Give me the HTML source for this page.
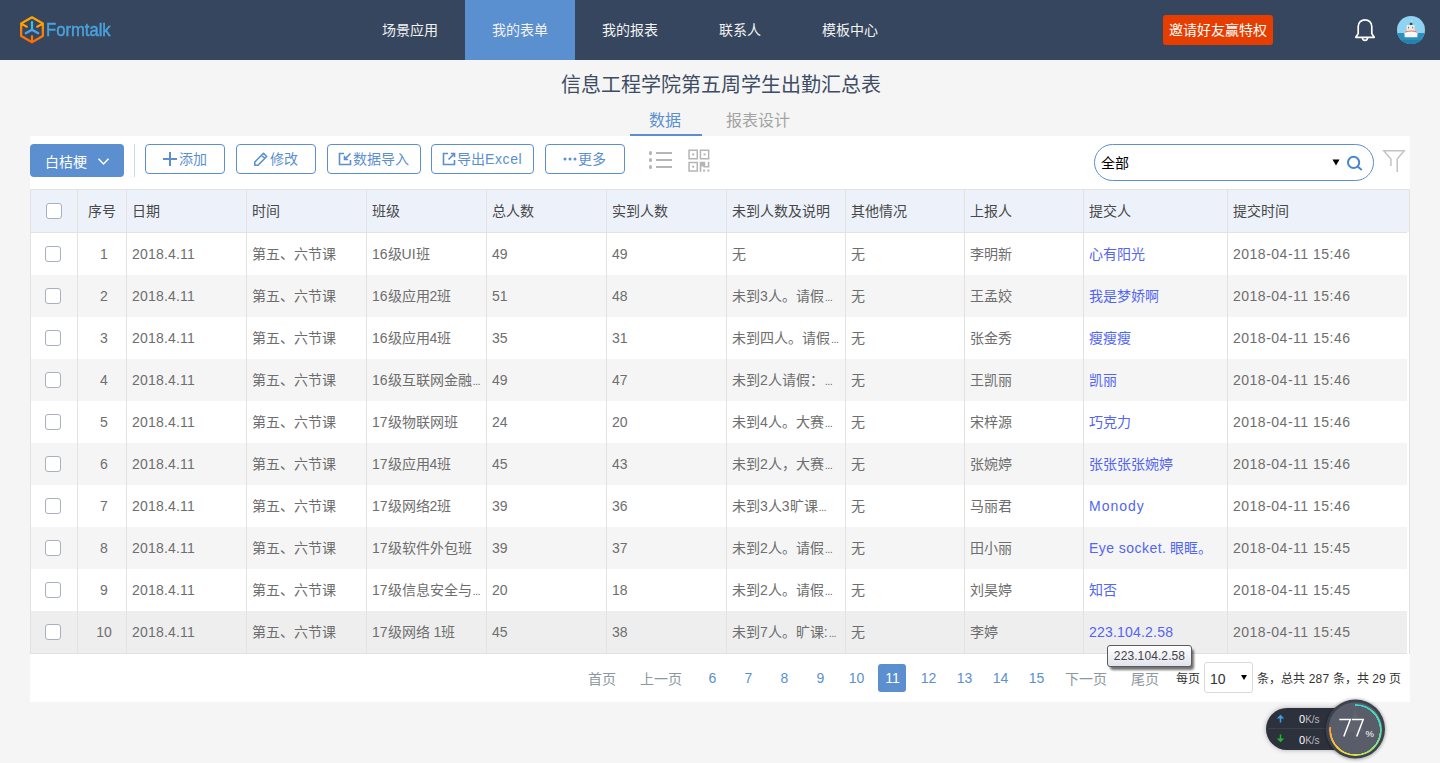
<!DOCTYPE html><html lang="zh-CN"><head><meta charset="utf-8"><title>Formtalk</title><style>
*{box-sizing:border-box;margin:0;padding:0}
html,body{width:1440px;height:763px;overflow:hidden}
body{background:#f5f5f5;font-family:"Liberation Sans",sans-serif;font-size:14px;color:#333;position:relative}
.abs{position:absolute}
.hdr{left:0;top:0;width:1440px;height:60px;background:#36465f}
.nav{top:0;height:60px;width:110px;color:#f2f2f2;font-size:14px;line-height:60px;text-align:center}
.nav.on{background:#5a8fd0}
.btn{top:144px;height:30px;border:1px solid #5b8fd0;border-radius:4px;background:#fff;color:#5b8fd0;font-size:14px;line-height:28px}
.cell{height:42px;line-height:42px;font-size:14px;color:#6e6e6e;white-space:nowrap;overflow:hidden;padding-left:5px}
.hc{color:#484848}
.vl{width:1px;background:#e2e2e2}
.cb{width:16px;height:16px;border:1px solid #a9b1bf;border-radius:3px;background:#fff}
.pg{top:664px;width:28px;text-indent:1px;height:28px;line-height:28px;text-align:center;color:#5b8fd0;font-size:14px}
.pgt{top:665px;height:28px;line-height:28px;color:#8e979f;font-size:14px}
</style></head><body>
<div class="abs hdr"></div>
<svg class="abs" style="left:17px;top:14px" width="30" height="32" viewBox="0 0 30 32">
<defs><linearGradient id="lg1" x1="0" y1="0" x2="0" y2="1"><stop offset="0" stop-color="#ffa800"/><stop offset="1" stop-color="#ff6a00"/></linearGradient>
<linearGradient id="lg2" x1="0" y1="0" x2="0" y2="1"><stop offset="0" stop-color="#1fd2f0"/><stop offset="1" stop-color="#5a9ae8"/></linearGradient></defs>
<path d="M15 3.3 L25.83 9.55 L25.83 22.05 L15 28.3 L4.17 22.05 L4.17 9.55 Z" fill="none" stroke="url(#lg1)" stroke-width="2.2" stroke-linejoin="round"/>
<path d="M5 10.1 L9.8 12.7 M25 10.1 L20.2 12.7 M15 27.5 L15 22.4" stroke="url(#lg1)" stroke-width="2.2" stroke-linecap="round"/>
<path d="M15 8.2 L15 15.7 L8.7 19.3 M15 15.7 L21.3 19.3" fill="none" stroke="url(#lg2)" stroke-width="2.2" stroke-linecap="round" stroke-linejoin="round"/>
</svg>
<div class="abs" style="left:46px;top:19px;font-size:19px;line-height:22px;color:#4aa3df;-webkit-text-stroke:0.45px #4aa3df;transform:scaleX(0.875);transform-origin:0 0">Formtalk</div>
<div class="abs nav" style="left:355px">场景应用</div>
<div class="abs nav on" style="left:465px">我的表单</div>
<div class="abs nav" style="left:575px">我的报表</div>
<div class="abs nav" style="left:685px">联系人</div>
<div class="abs nav" style="left:795px">模板中心</div>
<div class="abs" style="left:1163px;top:15px;width:110px;height:30px;background:#e63d00;border-radius:3px;color:#fff;font-size:14px;line-height:30px;text-align:center">邀请好友赢特权</div>
<svg class="abs" style="left:1352px;top:17px" width="26" height="26" viewBox="0 0 26 26">
<path d="M3.8 20.3 L22.2 20.3 L19.8 16.6 L19.8 9.6 C19.8 5.4 16.8 2.8 13 2.8 C9.2 2.8 6.2 5.4 6.2 9.6 L6.2 16.6 Z" fill="none" stroke="#fff" stroke-width="1.7" stroke-linejoin="round"/>
<path d="M10.4 20.8 C10.7 22.6 11.7 23.4 13 23.4 C14.3 23.4 15.3 22.6 15.6 20.8" fill="none" stroke="#fff" stroke-width="1.6"/>
</svg>
<svg class="abs" style="left:1397px;top:16px" width="28" height="28" viewBox="0 0 28 28">
<defs><clipPath id="cp"><circle cx="14" cy="14" r="14"/></clipPath></defs>
<g clip-path="url(#cp)"><rect width="28" height="28" fill="#8fd3f0"/><rect y="17" width="28" height="11" fill="#2b90c0"/><rect y="24" width="28" height="4" fill="#2580ae"/>
<path d="M14.5 4 q1.5 1 0 2" stroke="#c8ecfa" stroke-width="0.8" fill="none"/>
<rect x="12.8" y="6.8" width="2.6" height="2.4" fill="#4a4a4a"/>
<rect x="9.6" y="9" width="8" height="6" fill="#ececec"/><rect x="11" y="10.8" width="1" height="1.6" fill="#777"/><rect x="15.2" y="10.8" width="1" height="1.6" fill="#777"/>
<path d="M7.3 15.6 Q14 13.2 20.7 15.6 L20.3 21.3 L7.7 21.3 Z" fill="#f7f7f7"/><path d="M7.5 16.3 Q14 13.8 20.5 16.3" stroke="#e9705a" stroke-width="1.1" fill="none"/></g>
</svg>
<div class="abs" style="left:0;top:73px;width:1441px;text-align:center;font-size:20px;line-height:24px;color:#3e4d63;font-weight:300">信息工程学院第五周学生出勤汇总表</div>
<div class="abs" style="left:630px;top:110px;width:72px;text-align:center;text-indent:-2px;font-size:16px;line-height:22px;color:#5b8fd0">数据</div>
<div class="abs" style="left:630px;top:134px;width:72px;height:2px;background:#5b8fd0"></div>
<div class="abs" style="left:726px;top:110px;font-size:16px;line-height:22px;color:#a3a3a3">报表设计</div>
<div class="abs" style="left:30px;top:136px;width:1380px;height:566px;background:#fff"></div>
<div class="abs" style="left:30px;top:144px;width:94px;height:33px;background:#5b8fd0;border-radius:4px;color:#fff;font-size:14px;line-height:36px;padding-left:15px">白桔梗</div>
<svg class="abs" style="left:97px;top:157px" width="13" height="9" viewBox="0 0 13 9"><path d="M1.5 1.8 L6.5 7 L11.5 1.8" fill="none" stroke="#fff" stroke-width="1.5"/></svg>
<div class="abs" style="left:134px;top:144px;width:1px;height:33px;background:#cdd9ea"></div>
<div class="abs btn" style="left:145px;width:80px"></div>
<div class="abs btn" style="left:236px;width:80px"></div>
<div class="abs btn" style="left:327px;width:94px"></div>
<div class="abs btn" style="left:431px;width:103px"></div>
<div class="abs btn" style="left:545px;width:80px"></div>
<svg class="abs" style="left:163px;top:152px" width="14" height="14"><path d="M7 0 V14 M0 7 H14" stroke="#5b8fd0" stroke-width="2"/></svg>
<div class="abs" style="left:179px;top:148px;line-height:22px;color:#5b8fd0">添加</div>
<svg class="abs" style="left:253px;top:151px" width="16" height="16" viewBox="0 0 16 16"><path d="M1.8 14.2 L1.8 11 L10.5 2.3 L13.7 5.5 L5 14.2 Z M8.5 4.3 L11.7 7.5" fill="none" stroke="#5b8fd0" stroke-width="1.6" stroke-linejoin="round"/></svg>
<div class="abs" style="left:270px;top:148px;line-height:22px;color:#5b8fd0">修改</div>
<svg class="abs" style="left:338px;top:152px" width="14" height="14" viewBox="0 0 14 14"><path d="M6 1.5 H1.5 V12.5 H12.5 V8" fill="none" stroke="#5b8fd0" stroke-width="1.6"/><path d="M12.5 1.5 L6.5 7.5 M6.5 3.8 V7.5 H10.2" fill="none" stroke="#5b8fd0" stroke-width="1.6"/></svg>
<div class="abs" style="left:353px;top:148px;line-height:22px;color:#5b8fd0">数据导入</div>
<svg class="abs" style="left:442px;top:152px" width="14" height="14" viewBox="0 0 14 14"><path d="M6 1.5 H1.5 V12.5 H12.5 V8" fill="none" stroke="#5b8fd0" stroke-width="1.6"/><path d="M6.5 7.5 L12.5 1.5 M8.8 1.5 H12.5 V5.2" fill="none" stroke="#5b8fd0" stroke-width="1.6"/></svg>
<div class="abs" style="left:457px;top:148px;line-height:22px;color:#5b8fd0">导出<span style="letter-spacing:0.6px">Excel</span></div>
<svg class="abs" style="left:563px;top:157px" width="14" height="4"><circle cx="2" cy="2" r="1.5" fill="#5b8fd0"/><circle cx="7" cy="2" r="1.5" fill="#5b8fd0"/><circle cx="12" cy="2" r="1.5" fill="#5b8fd0"/></svg>
<div class="abs" style="left:578px;top:148px;line-height:22px;color:#5b8fd0">更多</div>
<svg class="abs" style="left:648px;top:149px" width="26" height="22" viewBox="0 0 26 22">
<rect x="1" y="2" width="3" height="4" rx="1.5" fill="#b5b5b5"/><rect x="1" y="9" width="3" height="4" rx="1.5" fill="#b5b5b5"/><rect x="1" y="16" width="3" height="4" rx="1.5" fill="#b5b5b5"/>
<rect x="8" y="3" width="16" height="2" fill="#b5b5b5"/><rect x="8" y="10" width="16" height="2" fill="#b5b5b5"/><rect x="8" y="17" width="16" height="2" fill="#b5b5b5"/></svg>
<svg class="abs" style="left:688px;top:149px" width="23" height="24" viewBox="0 0 23 24" fill="#b5b5b5">
<path d="M0.3 0.4 H10 V10.4 H0.3 Z M1.8 1.9 V8.9 H8.5 V1.9 Z" fill-rule="evenodd"/><rect x="4.2" y="4.4" width="2" height="2"/>
<path d="M11.7 0.4 H21.4 V10.4 H11.7 Z M13.2 1.9 V8.9 H19.9 V1.9 Z" fill-rule="evenodd"/><rect x="15.6" y="4.4" width="2" height="2"/>
<path d="M0.3 12.7 H10 V22.7 H0.3 Z M1.8 14.2 V21.2 H8.5 V14.2 Z" fill-rule="evenodd"/><rect x="4.2" y="16.7" width="2" height="2"/>
<path d="M11.7 12.7 H17.2 V17 H19.8 V12.7 H21.4 V18.5 H15.4 V17.4 H13.4 V22.7 H11.7 Z"/><rect x="15.1" y="20.6" width="2" height="2"/><rect x="19.4" y="20.6" width="2" height="2"/>
</svg>
<div class="abs" style="left:1094px;top:144px;width:280px;height:37px;border:1px solid #5b8fd0;border-radius:18.5px;background:#fff"></div>
<div class="abs" style="left:1101px;top:152px;line-height:22px;color:#000;font-size:14px">全部</div>
<svg class="abs" style="left:1332px;top:159px" width="8" height="7"><path d="M0.5 0.5 H7.5 L4 6.5 Z" fill="#000"/></svg>
<svg class="abs" style="left:1345px;top:154px" width="20" height="18" viewBox="0 0 20 18"><circle cx="8.6" cy="8.4" r="5.6" fill="none" stroke="#4a86cf" stroke-width="2"/><path d="M12.6 12.4 L16.8 16" stroke="#4a86cf" stroke-width="2"/></svg>
<svg class="abs" style="left:1382px;top:149px" width="24" height="24" viewBox="0 0 24 24"><path d="M8.9 17 V10 L1.8 1.8 H22.2 L15.2 10 V23" fill="none" stroke="#c4c4c4" stroke-width="1.5"/></svg>
<div class="abs" style="left:30px;top:189px;width:1380px;height:1px;background:#e2e2e2"></div>
<div class="abs" style="left:30px;top:190px;width:1379px;height:42px;background:#edf2fa"></div>
<div class="abs" style="left:30px;top:232px;width:1377px;height:1px;background:#e2e2e2"></div>
<div class="abs" style="left:31px;top:233px;width:1376px;height:42px;background:#fff"></div>
<div class="abs" style="left:31px;top:275px;width:1376px;height:42px;background:#f5f5f5"></div>
<div class="abs" style="left:31px;top:317px;width:1376px;height:42px;background:#fff"></div>
<div class="abs" style="left:31px;top:359px;width:1376px;height:42px;background:#f5f5f5"></div>
<div class="abs" style="left:31px;top:401px;width:1376px;height:42px;background:#fff"></div>
<div class="abs" style="left:31px;top:443px;width:1376px;height:42px;background:#f5f5f5"></div>
<div class="abs" style="left:31px;top:485px;width:1376px;height:42px;background:#fff"></div>
<div class="abs" style="left:31px;top:527px;width:1376px;height:42px;background:#f5f5f5"></div>
<div class="abs" style="left:31px;top:569px;width:1376px;height:42px;background:#fff"></div>
<div class="abs" style="left:31px;top:611px;width:1376px;height:42px;background:#eeeeee"></div>
<div class="abs" style="left:30px;top:653px;width:1377px;height:1px;background:#e2e2e2"></div>
<div class="abs vl" style="left:30px;top:189px;height:465px"></div>
<div class="abs vl" style="left:77px;top:190px;height:463px"></div>
<div class="abs vl" style="left:126px;top:190px;height:463px"></div>
<div class="abs vl" style="left:246px;top:190px;height:463px"></div>
<div class="abs vl" style="left:366px;top:190px;height:463px"></div>
<div class="abs vl" style="left:486px;top:190px;height:463px"></div>
<div class="abs vl" style="left:606px;top:190px;height:463px"></div>
<div class="abs vl" style="left:726px;top:190px;height:463px"></div>
<div class="abs vl" style="left:845px;top:190px;height:463px"></div>
<div class="abs vl" style="left:964px;top:190px;height:463px"></div>
<div class="abs vl" style="left:1083px;top:190px;height:463px"></div>
<div class="abs vl" style="left:1227px;top:190px;height:463px"></div>
<div class="abs vl" style="left:1409px;top:189px;height:465px"></div>
<div class="abs cb" style="left:46px;top:203px"></div>
<div class="abs cell hc" style="left:78px;top:190px;width:48px;text-align:center;padding-left:0">序号</div>
<div class="abs cell hc" style="left:127px;top:190px;width:119px">日期</div>
<div class="abs cell hc" style="left:247px;top:190px;width:119px">时间</div>
<div class="abs cell hc" style="left:367px;top:190px;width:119px">班级</div>
<div class="abs cell hc" style="left:487px;top:190px;width:119px">总人数</div>
<div class="abs cell hc" style="left:607px;top:190px;width:119px">实到人数</div>
<div class="abs cell hc" style="left:727px;top:190px;width:118px">未到人数及说明</div>
<div class="abs cell hc" style="left:846px;top:190px;width:118px">其他情况</div>
<div class="abs cell hc" style="left:965px;top:190px;width:118px">上报人</div>
<div class="abs cell hc" style="left:1084px;top:190px;width:143px">提交人</div>
<div class="abs cell hc" style="left:1228px;top:190px;width:180px">提交时间</div>
<div class="abs cb" style="left:45px;top:246px"></div>
<div class="abs cell" style="left:78px;top:233px;width:48px;text-align:center;padding-left:0;text-indent:4px">1</div>
<div class="abs cell" style="left:127px;top:233px;width:119px;letter-spacing:0.2px">2018.4.11</div>
<div class="abs cell" style="left:247px;top:233px;width:119px">第五、六节课</div>
<div class="abs cell" style="left:367px;top:233px;width:119px">16级UI班</div>
<div class="abs cell" style="left:487px;top:233px;width:119px">49</div>
<div class="abs cell" style="left:607px;top:233px;width:119px">49</div>
<div class="abs cell" style="left:727px;top:233px;width:118px">无</div>
<div class="abs cell" style="left:846px;top:233px;width:118px">无</div>
<div class="abs cell" style="left:965px;top:233px;width:118px">李明新</div>
<div class="abs cell" style="left:1084px;top:233px;width:143px;color:#5266f2">心有阳光</div>
<div class="abs cell" style="left:1228px;top:233px;width:180px;letter-spacing:0.5px">2018-04-11 15:46</div>
<div class="abs cb" style="left:45px;top:288px"></div>
<div class="abs cell" style="left:78px;top:275px;width:48px;text-align:center;padding-left:0;text-indent:4px">2</div>
<div class="abs cell" style="left:127px;top:275px;width:119px;letter-spacing:0.2px">2018.4.11</div>
<div class="abs cell" style="left:247px;top:275px;width:119px">第五、六节课</div>
<div class="abs cell" style="left:367px;top:275px;width:119px">16级应用2班</div>
<div class="abs cell" style="left:487px;top:275px;width:119px">51</div>
<div class="abs cell" style="left:607px;top:275px;width:119px">48</div>
<div class="abs cell" style="left:727px;top:275px;width:118px">未到3人。请假<span style="font-size:11px;letter-spacing:-0.6px;margin-left:1px">...</span></div>
<div class="abs cell" style="left:846px;top:275px;width:118px">无</div>
<div class="abs cell" style="left:965px;top:275px;width:118px">王孟姣</div>
<div class="abs cell" style="left:1084px;top:275px;width:143px;color:#5266f2">我是梦娇啊</div>
<div class="abs cell" style="left:1228px;top:275px;width:180px;letter-spacing:0.5px">2018-04-11 15:46</div>
<div class="abs cb" style="left:45px;top:330px"></div>
<div class="abs cell" style="left:78px;top:317px;width:48px;text-align:center;padding-left:0;text-indent:4px">3</div>
<div class="abs cell" style="left:127px;top:317px;width:119px;letter-spacing:0.2px">2018.4.11</div>
<div class="abs cell" style="left:247px;top:317px;width:119px">第五、六节课</div>
<div class="abs cell" style="left:367px;top:317px;width:119px">16级应用4班</div>
<div class="abs cell" style="left:487px;top:317px;width:119px">35</div>
<div class="abs cell" style="left:607px;top:317px;width:119px">31</div>
<div class="abs cell" style="left:727px;top:317px;width:118px">未到四人。请假<span style="font-size:11px;letter-spacing:-0.6px;margin-left:1px">...</span></div>
<div class="abs cell" style="left:846px;top:317px;width:118px">无</div>
<div class="abs cell" style="left:965px;top:317px;width:118px">张金秀</div>
<div class="abs cell" style="left:1084px;top:317px;width:143px;color:#5266f2">瘦瘦瘦</div>
<div class="abs cell" style="left:1228px;top:317px;width:180px;letter-spacing:0.5px">2018-04-11 15:46</div>
<div class="abs cb" style="left:45px;top:372px"></div>
<div class="abs cell" style="left:78px;top:359px;width:48px;text-align:center;padding-left:0;text-indent:4px">4</div>
<div class="abs cell" style="left:127px;top:359px;width:119px;letter-spacing:0.2px">2018.4.11</div>
<div class="abs cell" style="left:247px;top:359px;width:119px">第五、六节课</div>
<div class="abs cell" style="left:367px;top:359px;width:119px">16级互联网金融<span style="font-size:11px;letter-spacing:-0.6px;margin-left:1px">...</span></div>
<div class="abs cell" style="left:487px;top:359px;width:119px">49</div>
<div class="abs cell" style="left:607px;top:359px;width:119px">47</div>
<div class="abs cell" style="left:727px;top:359px;width:118px">未到2人请假：<span style="font-size:11px;letter-spacing:-0.6px;margin-left:1px">...</span></div>
<div class="abs cell" style="left:846px;top:359px;width:118px">无</div>
<div class="abs cell" style="left:965px;top:359px;width:118px">王凯丽</div>
<div class="abs cell" style="left:1084px;top:359px;width:143px;color:#5266f2">凯丽</div>
<div class="abs cell" style="left:1228px;top:359px;width:180px;letter-spacing:0.5px">2018-04-11 15:46</div>
<div class="abs cb" style="left:45px;top:414px"></div>
<div class="abs cell" style="left:78px;top:401px;width:48px;text-align:center;padding-left:0;text-indent:4px">5</div>
<div class="abs cell" style="left:127px;top:401px;width:119px;letter-spacing:0.2px">2018.4.11</div>
<div class="abs cell" style="left:247px;top:401px;width:119px">第五、六节课</div>
<div class="abs cell" style="left:367px;top:401px;width:119px">17级物联网班</div>
<div class="abs cell" style="left:487px;top:401px;width:119px">24</div>
<div class="abs cell" style="left:607px;top:401px;width:119px">20</div>
<div class="abs cell" style="left:727px;top:401px;width:118px">未到4人。大赛<span style="font-size:11px;letter-spacing:-0.6px;margin-left:1px">...</span></div>
<div class="abs cell" style="left:846px;top:401px;width:118px">无</div>
<div class="abs cell" style="left:965px;top:401px;width:118px">宋梓源</div>
<div class="abs cell" style="left:1084px;top:401px;width:143px;color:#5266f2">巧克力</div>
<div class="abs cell" style="left:1228px;top:401px;width:180px;letter-spacing:0.5px">2018-04-11 15:46</div>
<div class="abs cb" style="left:45px;top:456px"></div>
<div class="abs cell" style="left:78px;top:443px;width:48px;text-align:center;padding-left:0;text-indent:4px">6</div>
<div class="abs cell" style="left:127px;top:443px;width:119px;letter-spacing:0.2px">2018.4.11</div>
<div class="abs cell" style="left:247px;top:443px;width:119px">第五、六节课</div>
<div class="abs cell" style="left:367px;top:443px;width:119px">17级应用4班</div>
<div class="abs cell" style="left:487px;top:443px;width:119px">45</div>
<div class="abs cell" style="left:607px;top:443px;width:119px">43</div>
<div class="abs cell" style="left:727px;top:443px;width:118px">未到2人，大赛<span style="font-size:11px;letter-spacing:-0.6px;margin-left:1px">...</span></div>
<div class="abs cell" style="left:846px;top:443px;width:118px">无</div>
<div class="abs cell" style="left:965px;top:443px;width:118px">张婉婷</div>
<div class="abs cell" style="left:1084px;top:443px;width:143px;color:#5266f2">张张张张婉婷</div>
<div class="abs cell" style="left:1228px;top:443px;width:180px;letter-spacing:0.5px">2018-04-11 15:46</div>
<div class="abs cb" style="left:45px;top:498px"></div>
<div class="abs cell" style="left:78px;top:485px;width:48px;text-align:center;padding-left:0;text-indent:4px">7</div>
<div class="abs cell" style="left:127px;top:485px;width:119px;letter-spacing:0.2px">2018.4.11</div>
<div class="abs cell" style="left:247px;top:485px;width:119px">第五、六节课</div>
<div class="abs cell" style="left:367px;top:485px;width:119px">17级网络2班</div>
<div class="abs cell" style="left:487px;top:485px;width:119px">39</div>
<div class="abs cell" style="left:607px;top:485px;width:119px">36</div>
<div class="abs cell" style="left:727px;top:485px;width:118px">未到3人3旷课<span style="font-size:11px;letter-spacing:-0.6px;margin-left:1px">...</span></div>
<div class="abs cell" style="left:846px;top:485px;width:118px">无</div>
<div class="abs cell" style="left:965px;top:485px;width:118px">马丽君</div>
<div class="abs cell" style="left:1084px;top:485px;width:143px;color:#5266f2;letter-spacing:1px">Monody</div>
<div class="abs cell" style="left:1228px;top:485px;width:180px;letter-spacing:0.5px">2018-04-11 15:46</div>
<div class="abs cb" style="left:45px;top:540px"></div>
<div class="abs cell" style="left:78px;top:527px;width:48px;text-align:center;padding-left:0;text-indent:4px">8</div>
<div class="abs cell" style="left:127px;top:527px;width:119px;letter-spacing:0.2px">2018.4.11</div>
<div class="abs cell" style="left:247px;top:527px;width:119px">第五、六节课</div>
<div class="abs cell" style="left:367px;top:527px;width:119px">17级软件外包班</div>
<div class="abs cell" style="left:487px;top:527px;width:119px">39</div>
<div class="abs cell" style="left:607px;top:527px;width:119px">37</div>
<div class="abs cell" style="left:727px;top:527px;width:118px">未到2人。请假<span style="font-size:11px;letter-spacing:-0.6px;margin-left:1px">...</span></div>
<div class="abs cell" style="left:846px;top:527px;width:118px">无</div>
<div class="abs cell" style="left:965px;top:527px;width:118px">田小丽</div>
<div class="abs cell" style="left:1084px;top:527px;width:143px;color:#5266f2"><span style="letter-spacing:0.45px">Eye socket.</span> 眼眶。</div>
<div class="abs cell" style="left:1228px;top:527px;width:180px;letter-spacing:0.5px">2018-04-11 15:45</div>
<div class="abs cb" style="left:45px;top:582px"></div>
<div class="abs cell" style="left:78px;top:569px;width:48px;text-align:center;padding-left:0;text-indent:4px">9</div>
<div class="abs cell" style="left:127px;top:569px;width:119px;letter-spacing:0.2px">2018.4.11</div>
<div class="abs cell" style="left:247px;top:569px;width:119px">第五、六节课</div>
<div class="abs cell" style="left:367px;top:569px;width:119px">17级信息安全与<span style="font-size:11px;letter-spacing:-0.6px;margin-left:1px">...</span></div>
<div class="abs cell" style="left:487px;top:569px;width:119px">20</div>
<div class="abs cell" style="left:607px;top:569px;width:119px">18</div>
<div class="abs cell" style="left:727px;top:569px;width:118px">未到2人。请假<span style="font-size:11px;letter-spacing:-0.6px;margin-left:1px">...</span></div>
<div class="abs cell" style="left:846px;top:569px;width:118px">无</div>
<div class="abs cell" style="left:965px;top:569px;width:118px">刘昊婷</div>
<div class="abs cell" style="left:1084px;top:569px;width:143px;color:#5266f2">知否</div>
<div class="abs cell" style="left:1228px;top:569px;width:180px;letter-spacing:0.5px">2018-04-11 15:45</div>
<div class="abs cb" style="left:45px;top:624px"></div>
<div class="abs cell" style="left:78px;top:611px;width:48px;text-align:center;padding-left:0;text-indent:4px">10</div>
<div class="abs cell" style="left:127px;top:611px;width:119px;letter-spacing:0.2px">2018.4.11</div>
<div class="abs cell" style="left:247px;top:611px;width:119px">第五、六节课</div>
<div class="abs cell" style="left:367px;top:611px;width:119px">17级网络 1班</div>
<div class="abs cell" style="left:487px;top:611px;width:119px">45</div>
<div class="abs cell" style="left:607px;top:611px;width:119px">38</div>
<div class="abs cell" style="left:727px;top:611px;width:118px">未到7人。旷课:<span style="font-size:11px;letter-spacing:-0.6px;margin-left:1px">...</span></div>
<div class="abs cell" style="left:846px;top:611px;width:118px">无</div>
<div class="abs cell" style="left:965px;top:611px;width:118px">李婷</div>
<div class="abs cell" style="left:1084px;top:611px;width:143px;color:#5266f2;letter-spacing:0.2px">223.104.2.58</div>
<div class="abs cell" style="left:1228px;top:611px;width:180px;letter-spacing:0.5px">2018-04-11 15:45</div>
<div class="abs pgt" style="left:588px">首页</div>
<div class="abs pgt" style="left:640px">上一页</div>
<div class="abs pg" style="left:698px">6</div>
<div class="abs pg" style="left:734px">7</div>
<div class="abs pg" style="left:770px">8</div>
<div class="abs pg" style="left:806px">9</div>
<div class="abs pg" style="left:842px">10</div>
<div class="abs pg" style="left:878px;background:#5b8fd0;color:#fff;border-radius:3px">11</div>
<div class="abs pg" style="left:914px">12</div>
<div class="abs pg" style="left:950px">13</div>
<div class="abs pg" style="left:986px">14</div>
<div class="abs pg" style="left:1022px">15</div>
<div class="abs pgt" style="left:1065px">下一页</div>
<div class="abs pgt" style="left:1131px">尾页</div>
<div class="abs pgt" style="left:1176px;color:#333;font-size:12px">每页</div>
<div class="abs" style="left:1204px;top:662px;width:49px;height:31px;border:1px solid #d9d9d9;border-radius:3px;background:#fff"></div>
<div class="abs" style="left:1210px;top:668px;line-height:22px;color:#333">10</div>
<svg class="abs" style="left:1241px;top:675px" width="6" height="5"><path d="M0 0 H6 L3 5 Z" fill="#000"/></svg>
<div class="abs pgt" style="left:1257px;color:#333;font-size:12px;letter-spacing:0.1px">条，总共 287 条，共 29 页</div>
<div class="abs" style="left:1110px;top:649px;width:84px;height:21px;background:rgba(0,0,0,0.55);border-radius:3px;filter:blur(1.2px)"></div>
<div class="abs" style="left:1107px;top:645px;width:85px;height:22px;border:1px solid #5c5c5c;border-radius:3px;background:linear-gradient(#ffffff,#e2e2ee);font-size:12px;line-height:20px;color:#444;text-align:center;letter-spacing:0.1px">223.104.2.58</div>
<div class="abs" style="left:1266px;top:708px;width:100px;height:42px;border-radius:21px;background:#2d313b;box-shadow:0 0 5px rgba(0,0,0,0.3)"></div>
<div class="abs" style="left:1268px;top:728px;width:70px;height:1px;background:#3b404b"></div>
<svg class="abs" style="left:1276px;top:714px" width="9" height="9"><path d="M4.5 3 V8.5" stroke="#3aa0e8" stroke-width="1.5"/><path d="M0.8 4.6 L4.5 0.8 L8.2 4.6 Z" fill="#3aa0e8"/></svg>
<svg class="abs" style="left:1276px;top:734px" width="9" height="9"><path d="M4.5 0.5 V6" stroke="#22b832" stroke-width="1.5"/><path d="M0.8 4.4 L4.5 8.2 L8.2 4.4 Z" fill="#22b832"/></svg>
<div class="abs" style="left:1299px;top:712px;font-size:11px;line-height:14px;color:#fff">0<span style="color:#b5b8bf;font-size:10px">K/s</span></div>
<div class="abs" style="left:1299px;top:733px;font-size:11px;line-height:14px;color:#fff">0<span style="color:#b5b8bf;font-size:10px">K/s</span></div>
<svg class="abs" style="left:1320px;top:693px" width="72" height="70" viewBox="0 0 72 70">
<defs><filter id="sh" x="-30%" y="-30%" width="160%" height="160%"><feGaussianBlur stdDeviation="1.8"/></filter></defs>
<circle cx="35.4" cy="36.5" r="30.5" fill="rgba(0,0,0,0.28)" filter="url(#sh)"/>
<circle cx="35.4" cy="36" r="29.6" fill="#3e424c"/>
<circle cx="35.4" cy="36" r="26.8" fill="#585d69"/>
<path d="M35.4 16 L44 39 L26.8 39 Z" fill="#62676f" opacity="0.7"/><rect x="34.4" y="39" width="2" height="8" fill="#62676f" opacity="0.7"/>
</svg>
<div class="abs" style="left:1329px;top:703.5px;width:52.8px;height:52.8px;border-radius:50%;background:conic-gradient(from 0deg,#35d6c8 0%,#4fd8b0 22%,#9ee270 40%,#e6e23e 52%,#f2c43c 64%,#f39c3c 77%,transparent 77%);-webkit-mask:radial-gradient(circle,transparent 24.1px,#000 24.4px,#000 26.5px,transparent 26.8px)"></div>
<svg class="abs" style="left:1320px;top:693px" width="72" height="70" viewBox="0 0 72 70">
<path d="M19.3 26.4 H30.3 L23.8 43.5 M31.9 26.4 H43.2 L36.7 43.5" fill="none" stroke="#fff" stroke-width="1.5"/>
<text x="45.6" y="44.3" font-family="Liberation Sans" font-size="9.5" fill="#fff">%</text>
</svg>
</body></html>
